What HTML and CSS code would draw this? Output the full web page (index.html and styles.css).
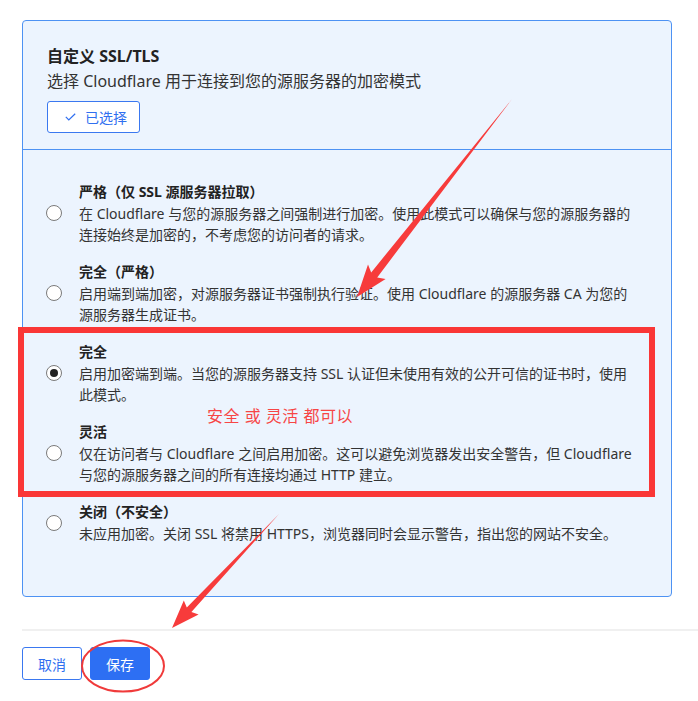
FILE: index.html
```html
<!DOCTYPE html>
<html lang="zh-CN">
<head>
    <meta charset="UTF-8">
    <meta name="viewport" content="width=device-width, initial-scale=1.0">
    <title>自定义 SSL/TLS</title>
    <link rel="stylesheet" href="styles.css">
</head>
<body>
    <div class="page">
        <div class="card">
            <div class="card-head">
                <h2 class="title">自定义 SSL/TLS</h2>
                <p class="subtitle">选择 Cloudflare 用于连接到您的源服务器的加密模式</p>
                <button class="chosen" type="button">
                    <svg class="check" width="11" height="8" viewBox="0 0 11 8"><polyline points="0.8,3.8 3.8,6.9 10.2,0.8" fill="none" stroke="currentColor" stroke-width="1.2"/></svg>
                    已选择
                </button>
            </div>
            <div class="options">
                <label class="option">
                    <input type="radio" name="mode">
                    <span class="radio"></span>
                    <span class="info">
                        <span class="name">严格（仅 SSL 源服务器拉取）</span>
                        <span class="desc">在 Cloudflare 与您的源服务器之间强制进行加密。使用此模式可以确保与您的源服务器的连接始终是加密的，不考虑您的访问者的请求。</span>
                    </span>
                </label>
                <label class="option">
                    <input type="radio" name="mode">
                    <span class="radio"></span>
                    <span class="info">
                        <span class="name">完全（严格）</span>
                        <span class="desc">启用端到端加密，对源服务器证书强制执行验证。使用 Cloudflare 的源服务器 CA 为您的源服务器生成证书。</span>
                    </span>
                </label>
                <label class="option">
                    <input type="radio" name="mode" checked>
                    <span class="radio"></span>
                    <span class="info">
                        <span class="name">完全</span>
                        <span class="desc">启用加密端到端。当您的源服务器支持 SSL 认证但未使用有效的公开可信的证书时，使用此模式。</span>
                    </span>
                </label>
                <label class="option">
                    <input type="radio" name="mode">
                    <span class="radio"></span>
                    <span class="info">
                        <span class="name">灵活</span>
                        <span class="desc">仅在访问者与 Cloudflare 之间启用加密。这可以避免浏览器发出安全警告，但 Cloudflare 与您的源服务器之间的所有连接均通过 HTTP 建立。</span>
                    </span>
                </label>
                <label class="option">
                    <input type="radio" name="mode">
                    <span class="radio"></span>
                    <span class="info">
                        <span class="name">关闭（不安全）</span>
                        <span class="desc">未应用加密。关闭 SSL 将禁用 HTTPS，浏览器同时会显示警告，指出您的网站不安全。</span>
                    </span>
                </label>
            </div>
        </div>

        <div class="footer">
            <button class="btn btn-cancel" type="button">取消</button>
            <button class="btn btn-save" type="button">保存</button>
        </div>

        <!-- screenshot annotations -->
        <div class="mark-box"></div>
        <div class="mark-note">安全 或 灵活 都可以</div>
        <svg class="marks" width="698" height="701" viewBox="0 0 698 701">
            <polygon fill="#f73b3b" points="512,99 377.2,277.4 385.6,279 357,297 368,264.6 371.2,272.4"/>
            <polygon fill="#f73b3b" points="279,514 191.4,612 198.6,614.6 172,628 183.8,600.6 186.8,607.6"/>
            <ellipse cx="123" cy="666" rx="41" ry="25.5" fill="none" stroke="#f03a3a" stroke-width="2"/>
        </svg>
    </div>
</body>
</html>
```

FILE: styles.css
```css
* {
    margin: 0;
    padding: 0;
    box-sizing: border-box;
}
body {
    font-family: "Noto Sans", "Noto Sans CJK SC", sans-serif;
    color: #333;
    background: #fff;
}
.page {
    position: relative;
    width: 698px;
    height: 701px;
    padding: 20px 0 0 22px;
    overflow: hidden;
}
.card {
    width: 650px;
    background-color: #ecf4fe;
    border: 1px solid #4d92f3;
    border-radius: 4px;
}
.card-head {
    padding: 24px 24px 16px;
    border-bottom: 1px solid #4d92f3;
}
.title {
    font-size: 16px;
    line-height: 22px;
    font-weight: bold;
    color: #222;
}
.subtitle {
    margin-top: 2px;
    font-size: 16px;
    line-height: 24px;
    color: #333;
}
.chosen {
    display: flex;
    align-items: center;
    gap: 9px;
    margin-top: 8px;
    width: 93px;
    height: 32px;
    padding-left: 17px;
    font-family: inherit;
    font-size: 14px;
    color: #2f6ff0;
    background: #fff;
    border: 1px solid #3a78f0;
    border-radius: 3px;
}
.check {
    display: block;
}
.options {
    padding: 31px 33px 52px 23px;
}
.option {
    display: flex;
    align-items: center;
    gap: 17px;
    margin-bottom: 16px;
}
.option:last-child {
    margin-bottom: 0;
}
.option input {
    display: none;
}
.radio {
    flex: none;
    position: relative;
    width: 16px;
    height: 16px;
    border: 1px solid #7a7a7a;
    border-radius: 50%;
    background: #fff;
}
input:checked + .radio:before {
    content: "";
    position: absolute;
    top: 3px;
    left: 3px;
    width: 8px;
    height: 8px;
    border-radius: 50%;
    background: #222;
}
.info {
    display: flex;
    flex-direction: column;
    font-size: 14px;
    line-height: 21px;
}
.name {
    font-weight: bold;
    line-height: 22px;
    color: #222;
}
.desc {
    color: #333;
}
.footer {
    display: flex;
    gap: 8px;
    margin-top: 32px;
    padding-top: 16px;
    border-top: 2px solid #f0f0f0;
}
.btn {
    width: 60px;
    height: 33px;
    font-family: inherit;
    font-size: 14px;
    border-radius: 3px;
    border: 1px solid #3a78f0;
}
.btn-cancel {
    background: #fff;
    color: #2f6ff0;
}
.btn-save {
    background: #2d6ff3;
    color: #fff;
    border-color: #2d6ff3;
}
.mark-box {
    position: absolute;
    left: 18px;
    top: 327px;
    width: 637px;
    height: 170px;
    border: 6px solid #fa3636;
}
.mark-note {
    position: absolute;
    left: 207px;
    top: 405px;
    font-size: 16px;
    line-height: 22px;
    letter-spacing: 0.5px;
    color: #f74545;
}
.marks {
    position: absolute;
    left: 0;
    top: 0;
    pointer-events: none;
}
```
